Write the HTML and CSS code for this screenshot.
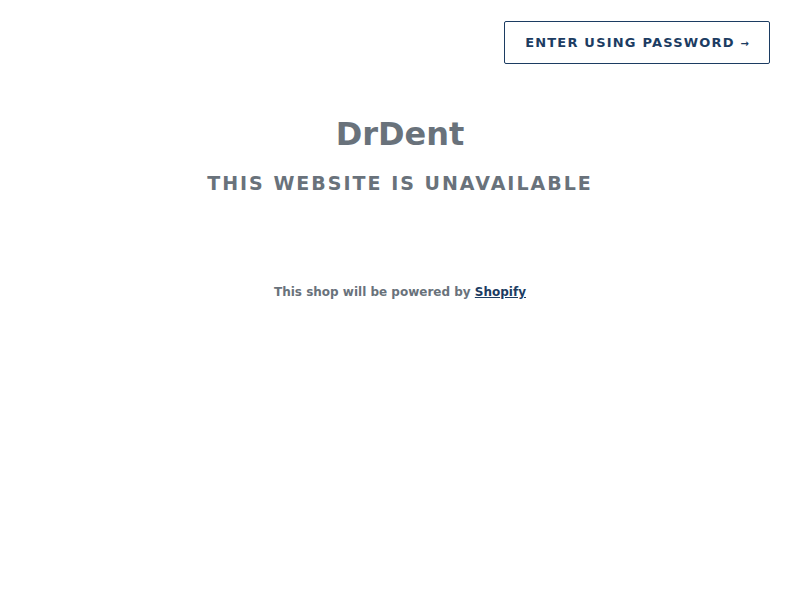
FILE: index.html
```html
<!DOCTYPE html>
<html lang="en">
<head>
  <meta charset="UTF-8">
  <meta name="viewport" content="width=device-width, initial-scale=1.0">
  <title>DrDent</title>
  <link rel="stylesheet" href="styles.css">
</head>
<body>
  <header class="top-bar">
    <a href="#" class="btn-password">Enter using password <span class="arrow">&rarr;</span></a>
  </header>
  <main class="content">
    <h1 class="shop-name">DrDent</h1>
    <h2 class="status">This website is unavailable</h2>
  </main>
  <footer class="powered">
    This shop will be powered by <a href="#">Shopify</a>
  </footer>
</body>
</html>
```

FILE: styles.css
```css
body {
  margin: 0;
  font-family: "DejaVu Sans", sans-serif;
  color: #69727b;
  background: #fff;
}
.top-bar {
  display: flex;
  justify-content: flex-end;
  padding: 21px 30px 0 0;
}
.btn-password {
  display: inline-block;
  box-sizing: border-box;
  width: 266px;
  height: 43px;
  line-height: 41px;
  text-align: center;
  border: 1px solid #1c3c62;
  border-radius: 2px;
  color: #1c3c62;
  font-size: 13px;
  font-weight: bold;
  letter-spacing: 1.2px;
  text-transform: uppercase;
  text-decoration: none;
}
.arrow {
  font-size: 10px;
  letter-spacing: 0;
}
.content {
  text-align: center;
  margin-top: 48px;
}
.shop-name {
  margin: 0;
  font-size: 32px;
  line-height: 44px;
}
.status {
  margin: 16px 0 0;
  font-size: 19px;
  letter-spacing: 2px;
  text-transform: uppercase;
}
.powered {
  text-align: center;
  margin-top: 91px;
  font-size: 12px;
  font-weight: bold;
}
.powered a {
  color: #1c3c62;
}
```
